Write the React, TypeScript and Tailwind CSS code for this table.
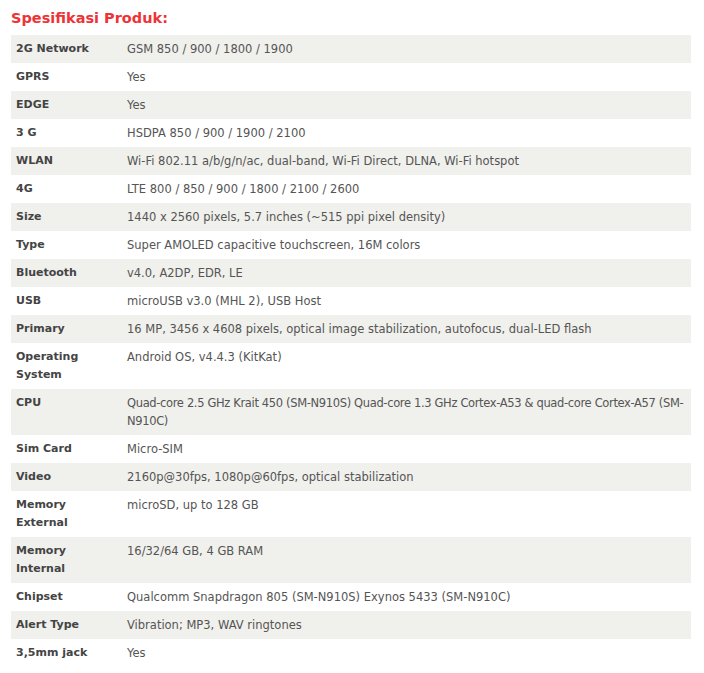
const specs: [string, string][] = [
  ["2G Network", "GSM 850 / 900 / 1800 / 1900"],
  ["GPRS", "Yes"],
  ["EDGE", "Yes"],
  ["3 G", "HSDPA 850 / 900 / 1900 / 2100"],
  ["WLAN", "Wi-Fi 802.11 a/b/g/n/ac, dual-band, Wi-Fi Direct, DLNA, Wi-Fi hotspot"],
  ["4G", "LTE 800 / 850 / 900 / 1800 / 2100 / 2600"],
  ["Size", "1440 x 2560 pixels, 5.7 inches (~515 ppi pixel density)"],
  ["Type", "Super AMOLED capacitive touchscreen, 16M colors"],
  ["Bluetooth", "v4.0, A2DP, EDR, LE"],
  ["USB", "microUSB v3.0 (MHL 2), USB Host"],
  ["Primary", "16 MP, 3456 x 4608 pixels, optical image stabilization, autofocus, dual-LED flash"],
  ["Operating System", "Android OS, v4.4.3 (KitKat)"],
  ["CPU", "Quad-core 2.5 GHz Krait 450 (SM-N910S) Quad-core 1.3 GHz Cortex-A53 & quad-core Cortex-A57 (SM-N910C)"],
  ["Sim Card", "Micro-SIM"],
  ["Video", "2160p@30fps, 1080p@60fps, optical stabilization"],
  ["Memory External", "microSD, up to 128 GB"],
  ["Memory Internal", "16/32/64 GB, 4 GB RAM"],
  ["Chipset", "Qualcomm Snapdragon 805 (SM-N910S) Exynos 5433 (SM-N910C)"],
  ["Alert Type", "Vibration; MP3, WAV ringtones"],
  ["3,5mm jack", "Yes"],
];

export default function App() {
  return (
    <div className="bg-white px-[11px] pt-[8px] w-[702px] font-['DejaVu_Sans',sans-serif] text-[#555]">
      <h2 className="text-[14.5px] font-bold text-[#ee3338] leading-[20px] mb-[7px]">Spesifikasi Produk:</h2>
      <table className="w-[680px] table-fixed border-collapse text-[11.5px] leading-[18px]">
        <colgroup>
          <col className="w-[111px]" />
          <col />
        </colgroup>
        <tbody>
          {specs.map(([label, value], i) => (
            <tr key={label} className={i % 2 === 0 ? "bg-[#f0f0ec]" : "bg-white"}>
              <td className="px-[5px] py-[5px] align-top text-[11px] font-bold text-[#444]">{label}</td>
              <td className={`px-[5px] py-[5px] align-top ${label === "CPU" ? "tracking-[-0.35px]" : ""}`}>{value}</td>
            </tr>
          ))}
        </tbody>
      </table>
    </div>
  );
}
